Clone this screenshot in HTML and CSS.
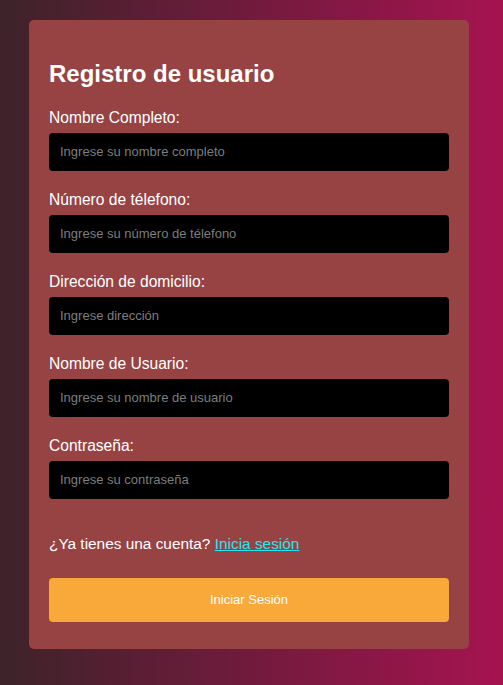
FILE: index.html
```html
<!DOCTYPE html>
<html lang="es">
<head>
<meta charset="utf-8">
<title>Registro de usuario</title>
<link rel="stylesheet" href="styles.css">
</head>
<body>
<div class="card">
  <h2 class="title">Registro de usuario</h2>
  <div class="group">
    <label class="label">Nombre Completo:</label>
    <input class="input" type="text" placeholder="Ingrese su nombre completo">
  </div>
  <div class="group">
    <label class="label">Número de télefono:</label>
    <input class="input" type="text" placeholder="Ingrese su número de télefono">
  </div>
  <div class="group">
    <label class="label">Dirección de domicilio:</label>
    <input class="input" type="text" placeholder="Ingrese dirección">
  </div>
  <div class="group">
    <label class="label">Nombre de Usuario:</label>
    <input class="input" type="text" placeholder="Ingrese su nombre de usuario">
  </div>
  <div class="group">
    <label class="label">Contraseña:</label>
    <input class="input" type="password" placeholder="Ingrese su contraseña">
  </div>
  <p class="account">¿Ya tienes una cuenta? <a class="link" href="#">Inicia sesión</a></p>
  <button class="btn" type="button">Iniciar Sesión</button>
</div>
</body>
</html>
```
FILE: styles.css
```css
html, body {
  height: 100%;
}
body {
  margin: 0;
  background: linear-gradient(to right, #3d2329 0%, #a61350 100%);
  font-family: "Liberation Sans", Arial, sans-serif;
  color: #fff;
}
.card {
  width: 400px;
  margin-left: 29px;
  margin-top: 20px;
  padding: 20px 20px 27px;
  background: #974344;
  border-radius: 5px;
}
.title {
  font-size: 24px;
  font-weight: bold;
  margin: 20px 0;
  line-height: 27.5px;
}
.group {
  margin-bottom: 19px;
}
.label {
  display: block;
  font-size: 15.6px;
  line-height: 17px;
  padding-top: 1px;
  margin-bottom: 7px;
}
.input {
  display: block;
  box-sizing: border-box;
  width: 400px;
  height: 38px;
  margin: 0;
  padding: 0 11px;
  border: none;
  border-radius: 4px;
  background: #000;
  color: #fff;
  font-family: "Liberation Sans", Arial, sans-serif;
  font-size: 13px;
  outline: none;
}
.input::placeholder {
  color: #7d7d7d;
}
.account {
  margin: 36px 0 0;
  font-size: 15.4px;
  line-height: 17px;
}
.link {
  color: #22e7f2;
  text-decoration: underline;
}
.btn {
  display: block;
  width: 400px;
  height: 44px;
  margin-top: 26px;
  border: none;
  border-radius: 4px;
  background: #f9a83a;
  color: #fff;
  font-family: "Liberation Sans", Arial, sans-serif;
  font-size: 13px;
}
```
